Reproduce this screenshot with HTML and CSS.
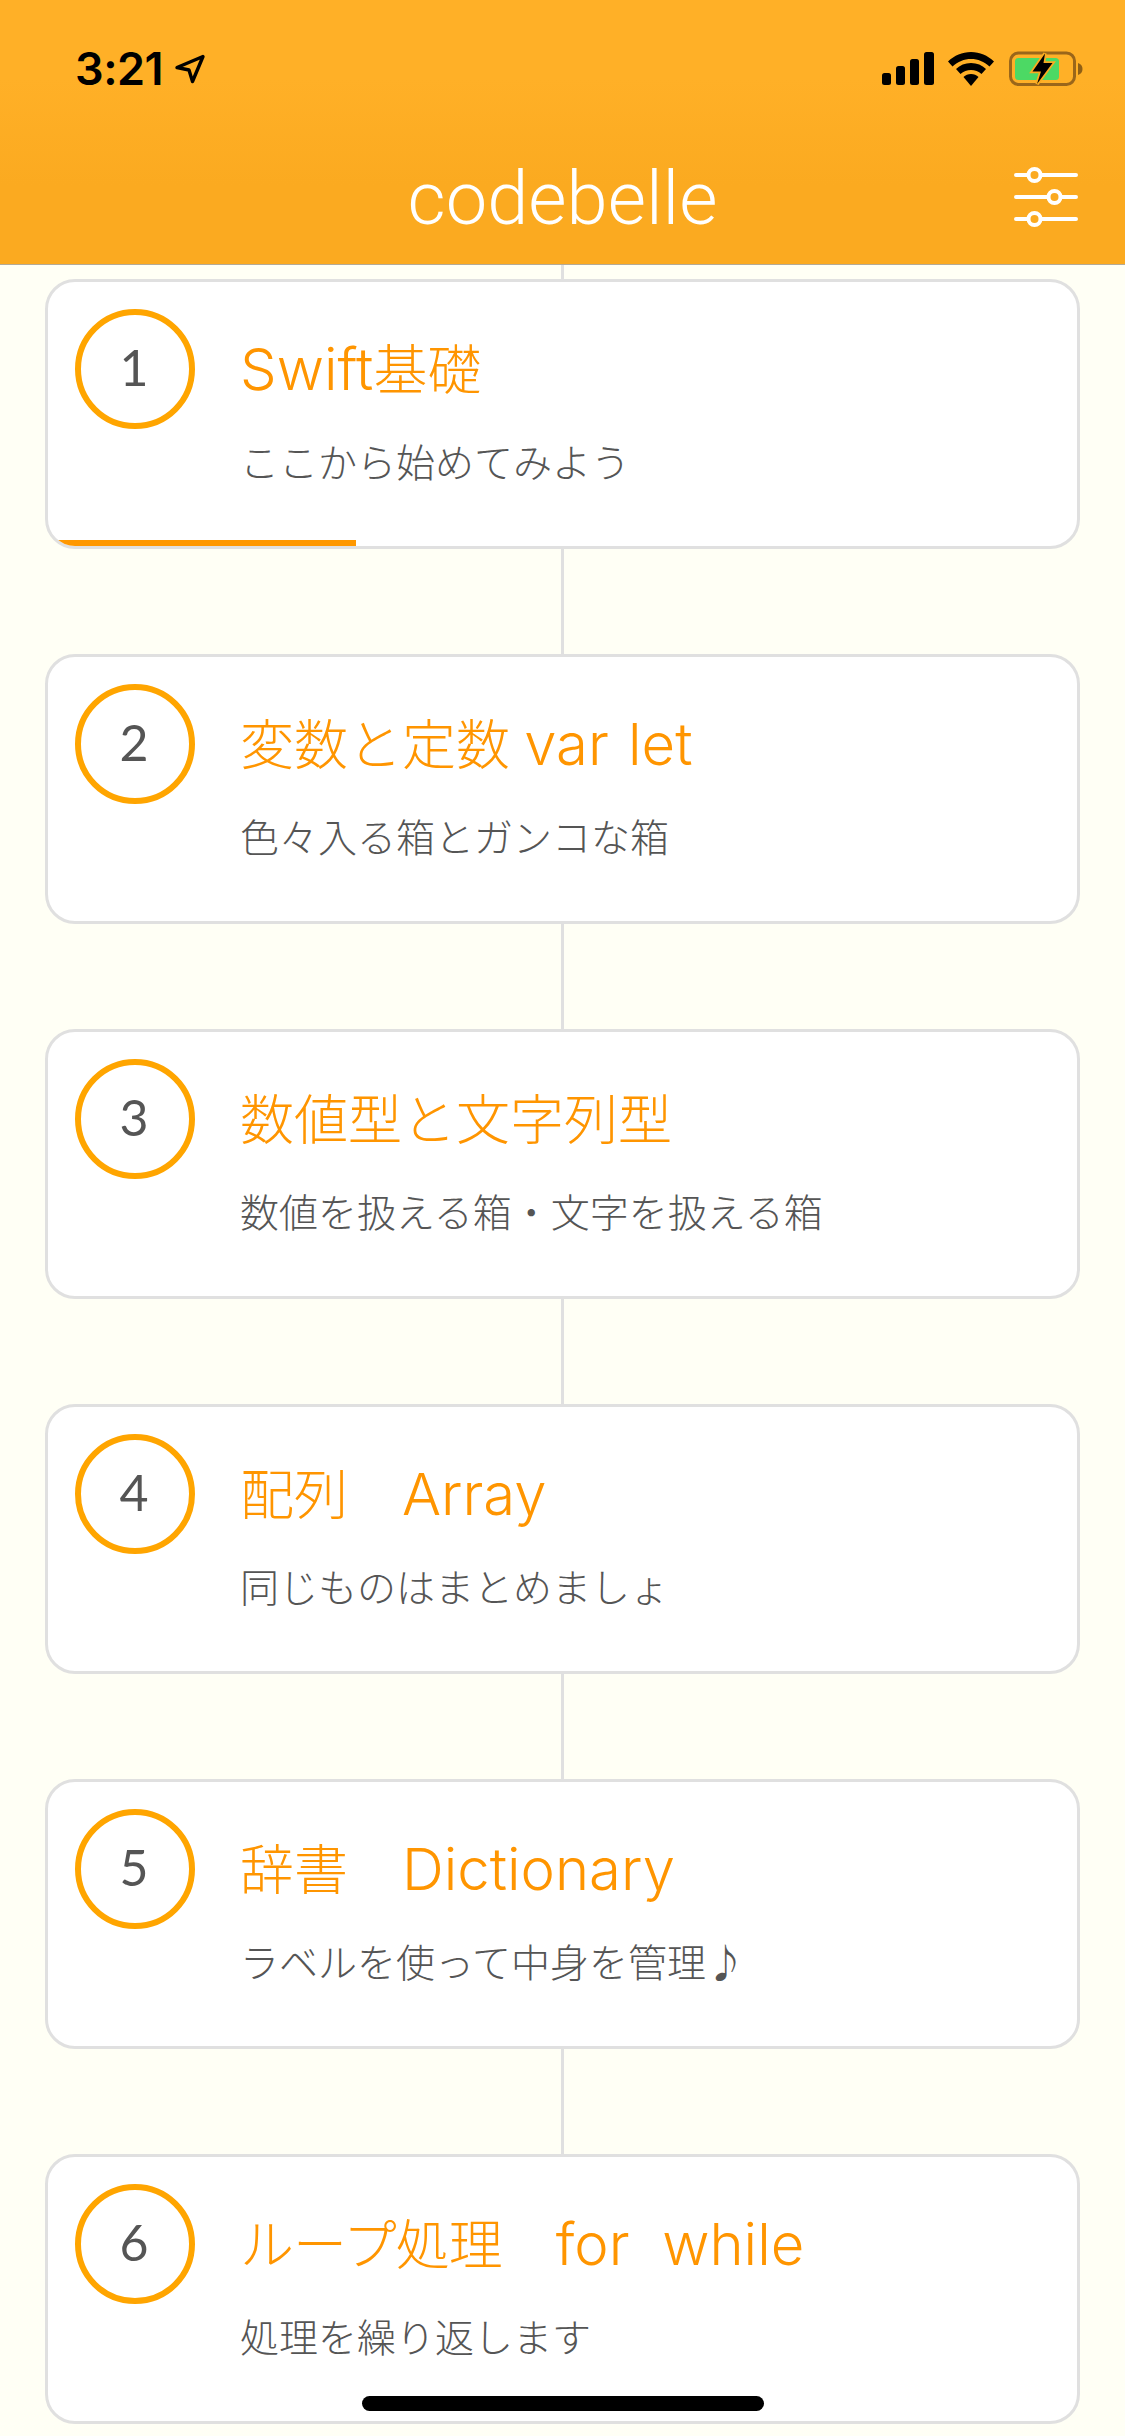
FILE: index.html
```html
<!DOCTYPE html>
<html lang="ja">
<head>
<meta charset="utf-8">
<title>codebelle</title>
<link rel="stylesheet" href="styles.css">
</head>
<body>
<div class="screen">
  <header class="header">
    <div class="status">
      <div class="status-left">
        <span class="time">3:21</span>
        <svg class="loc" width="32" height="32" viewBox="0 0 32 32"><path d="M29 3.500 3 14.500l12 2.500 3.500 11.500z" fill="none" stroke="#000" stroke-width="3.400" stroke-linejoin="round"/></svg>
      </div>
      <div class="status-right">
        <svg width="52" height="33" viewBox="0 0 52 33"><rect x="0" y="21" width="9" height="12" rx="2.500"/><rect x="14" y="14" width="9" height="19" rx="2.500"/><rect x="28" y="7" width="9" height="26" rx="2.500"/><rect x="42" y="0" width="10" height="33" rx="2.500"/></svg>
        <svg class="wifi" width="46" height="34" viewBox="0 0 46 34"><path d="M23 0C14 0 6.500 3.500 0 9.500l4.500 5C10 9.500 16 7 23 7s13 2.500 18.500 7.500l4.500-5C39.500 3.500 32 0 23 0z"/><path d="M23 11c-6 0-11 2.200-15 6l4.500 5c3-2.600 6.500-4 10.500-4s7.500 1.400 10.500 4l4.500-5c-4-3.800-9-6-15-6z"/><path d="M23 22c-3 0-5.500 1-7.500 3L23 34l7.500-9c-2-2-4.500-3-7.500-3z"/></svg>
        <svg class="battery" width="74" height="36" viewBox="0 0 74 36"><rect x="1.500" y="2" width="64" height="31.500" rx="8" fill="none" stroke="#9a661a" stroke-width="3"/><path d="M69 12c3 1 4.500 3 4.500 6s-1.500 5-4.500 6z" fill="#8f5f15"/><rect x="6" y="7" width="44" height="22" rx="3.500" fill="#4cd964"/><path d="M36 2.500 23.500 20.500H32L28 33 43.500 12H34.500z" fill="#000" stroke="#fbab20" stroke-width="3.500" stroke-linejoin="miter" paint-order="stroke"/></svg>
      </div>
    </div>
    <div class="nav">
      <span class="brand">codebelle</span>
      <svg class="filter" width="64" height="60" viewBox="0 0 64 60" fill="none" stroke="#fff" stroke-width="4" stroke-linecap="round"><path d="M2 8h12M27 8h35M2 30h32M47 30h15M2 52h12M27 52h35"/><circle cx="20.500" cy="8" r="6"/><circle cx="40.500" cy="30" r="6"/><circle cx="20.500" cy="52" r="6"/></svg>
    </div>
  </header>
  <main class="list">
    <article class="card">
      <div class="num">1</div>
      <div class="text"><h2 class="title"><span class="latin">Swift</span>基礎</h2><p class="sub">ここから始めてみよう</p></div>
      <div class="progress"></div>
    </article>
    <article class="card">
      <div class="num">2</div>
      <div class="text"><h2 class="title">変数と定数<span class="latin wide"> var let</span></h2><p class="sub">色々入る箱とガンコな箱</p></div>
    </article>
    <article class="card">
      <div class="num">3</div>
      <div class="text"><h2 class="title">数値型と文字列型</h2><p class="sub">数値を扱える箱・文字を扱える箱</p></div>
    </article>
    <article class="card">
      <div class="num">4</div>
      <div class="text"><h2 class="title">配列　<span class="latin">Array</span></h2><p class="sub">同じものはまとめましょ</p></div>
    </article>
    <article class="card">
      <div class="num">5</div>
      <div class="text"><h2 class="title">辞書　<span class="latin">Dictionary</span></h2><p class="sub">ラベルを使って中身を管理♪</p></div>
    </article>
    <article class="card">
      <div class="num">6</div>
      <div class="text"><h2 class="title"><span class="tight">ループ処理</span>　<span class="latin">for&nbsp;&nbsp;while</span></h2><p class="sub">処理を繰り返します</p></div>
    </article>
  </main>
  <div class="home"></div>
</div>
</body>
</html>
```
FILE: styles.css
```css
* { box-sizing: border-box; }
html, body { margin: 0; padding: 0; }
body { background: #fffff5; font-family: "Noto Sans CJK JP", "Noto Sans", sans-serif; }
.screen { position: relative; width: 1125px; height: 2436px; overflow: hidden; background: #fffff5; }

.header { height: 265px; background: linear-gradient(#ffb027 30%, #fbaa20 70%); border-bottom: 1px solid #b4aa96; padding: 0 42px 0 75px; }
.status { display: flex; justify-content: space-between; align-items: flex-start; padding-top: 51px; height: 164px; }
.status-left { display: flex; align-items: center; gap: 11px; height: 36px; }
.time { font-family: Inter, "Liberation Sans", sans-serif; font-weight: 600; font-size: 45px; line-height: 36px; color: #000; letter-spacing: -0.5px; }
.status-right { display: flex; align-items: flex-start; gap: 14px; padding-top: 1px; }
.battery { margin-top: -1px; margin-left: 1px; }

.nav { position: relative; display: flex; justify-content: center; align-items: center; height: 70px; margin-left: -75px; margin-right: -42px; }
.brand { font-family: Roboto, "Liberation Sans", sans-serif; font-weight: 300; font-size: 74px; line-height: 70px; color: #fff; }
.filter { position: absolute; right: 47px; top: 3px; }

.list { position: relative; display: flex; flex-direction: column; gap: 105px; padding: 14px 45px 0; }
.list::before { content: ""; position: absolute; left: 561px; top: 0; bottom: 0; width: 3px; background: #e0e0e0; }

.card { position: relative; display: flex; flex: none; align-items: flex-start; height: 270px; background: #fff; border: 3px solid #e0e0e0; border-radius: 30px; padding: 27px 0 0 27px; overflow: hidden; }
.num { flex: none; display: flex; align-items: center; justify-content: center; width: 120px; height: 120px; padding: 0 2px 4px 0; border: 6px solid #ffa500; border-radius: 50%; font-family: Lato, "Noto Sans", sans-serif; font-size: 50px; color: #555; }
.text { margin-left: 45px; }
.title { margin: 0; padding-top: 22px; height: 96px; font-family: "Noto Sans CJK JP", sans-serif; font-weight: 300; font-size: 54px; line-height: 72px; color: #ff9500; white-space: nowrap; }
.latin { font-family: Inter, sans-serif; font-size: 58px; line-height: 1; }
.wide { margin-left: -5px; word-spacing: 3px; }
.tight { letter-spacing: -1px; }
.sub { margin: 29px 0 0; font-weight: 300; font-size: 39px; line-height: 52px; color: #555; white-space: nowrap; }
.progress { position: absolute; left: 0; bottom: 0; width: 308px; height: 6px; background: #ff9800; }

.home { position: absolute; left: 362px; bottom: 25px; width: 402px; height: 15px; border-radius: 8px; background: #000; }
```
